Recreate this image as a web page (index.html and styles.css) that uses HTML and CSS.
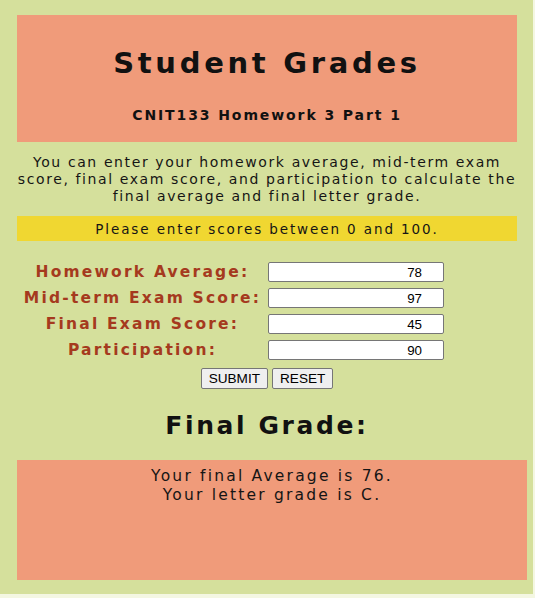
FILE: index.html
```html
<!DOCTYPE html>
<html lang="en">
<head>
<meta charset="utf-8">
<title>Student Grades</title>
<link rel="stylesheet" href="styles.css">
</head>
<body>
<div class="page">
  <header class="banner">
    <h1 class="title">Student Grades</h1>
    <h2 class="subtitle">CNIT133 Homework 3 Part 1</h2>
  </header>
  <p class="intro">You can enter your homework average, mid-term exam score, final exam score, and participation to calculate the final average and final letter grade.</p>
  <div class="notice">Please enter scores between 0 and 100.</div>
  <form class="grades">
    <label class="label" for="hw">Homework Average:</label>
    <input class="field" id="hw" type="text" value="78">
    <label class="label" for="mid">Mid-term Exam Score:</label>
    <input class="field" id="mid" type="text" value="97">
    <label class="label" for="fin">Final Exam Score:</label>
    <input class="field" id="fin" type="text" value="45">
    <label class="label" for="part">Participation:</label>
    <input class="field" id="part" type="text" value="90">
    <div class="actions">
      <button class="btn" type="button">SUBMIT</button>
      <button class="btn" type="reset">RESET</button>
    </div>
  </form>
  <h2 class="final">Final Grade:</h2>
  <div class="result">
    Your final Average is 76.<br>
    Your letter grade is C.
  </div>
</div>
</body>
</html>
```
FILE: styles.css
```css
html, body {
  margin: 0;
  padding: 0;
  background: #f4f7e2;
}
body {
  width: 535px;
  height: 598px;
  overflow: hidden;
}
.page {
  width: 533px;
  height: 594px;
  box-sizing: border-box;
  background: #d5e09c;
  padding: 15px 0 0 17px;
  font-family: "DejaVu Sans", "Open Sans", sans-serif;
  color: #111;
}
.banner {
  width: 500px;
  height: 127px;
  background: #f09b7a;
  text-align: center;
  display: flex;
  flex-direction: column;
  align-items: center;
  box-sizing: border-box;
  padding-top: 30px;
}
.title {
  margin: 0;
  font-size: 29px;
  font-weight: 700;
  letter-spacing: 3.7px;
  line-height: 36px;
}
.subtitle {
  margin: 25px 0 0;
  font-size: 14px;
  font-weight: 700;
  letter-spacing: 1.9px;
  line-height: 18px;
}
.intro {
  width: 500px;
  margin: 12px 0 0;
  text-align: center;
  font-size: 14px;
  line-height: 17px;
  letter-spacing: 1.6px;
  color: #151515;
}
.notice {
  width: 500px;
  height: 25px;
  margin-top: 11px;
  background: #f0d731;
  text-align: center;
  font-size: 13.5px;
  line-height: 26px;
  letter-spacing: 1.9px;
  color: #151515;
}
.grades {
  width: 500px;
  margin-top: 21px;
  display: grid;
  grid-template-columns: 251px 176px 73px;
  row-gap: 6px;
  align-items: center;
}
.label {
  grid-column: 1;
  text-align: center;
  color: #a53a1e;
  font-weight: 700;
  font-size: 15.5px;
  letter-spacing: 2.2px;
  line-height: 20px;
  white-space: nowrap;
}
.field {
  grid-column: 2;
  width: 176px;
  height: 20px;
  box-sizing: border-box;
  border: 1px solid #767676;
  border-radius: 2px;
  background: #fff;
  font-family: "Liberation Sans", Arial, sans-serif;
  font-size: 13.33px;
  text-align: right;
  padding: 1px 21px 1px 2px;
  margin: 0;
  color: #000;
}
.actions {
  grid-column: 1 / -1;
  display: flex;
  justify-content: center;
  gap: 4px;
  margin-top: 2px;
}
.btn {
  height: 21px;
  box-sizing: border-box;
  font-family: "Liberation Sans", Arial, sans-serif;
  font-size: 13.6px;
  background: #efefef;
  border: 1px solid #767676;
  border-radius: 2px;
  padding: 1px 7px;
  color: #000;
  margin: 0;
}
.final {
  width: 500px;
  margin: 22px 0 0;
  text-align: center;
  font-size: 25px;
  font-weight: 700;
  letter-spacing: 2.6px;
  line-height: 30px;
}
.result {
  width: 510px;
  height: 120px;
  margin-top: 19px;
  background: #f09b7a;
  box-sizing: border-box;
  padding-top: 7px;
  text-align: center;
  font-size: 15.5px;
  line-height: 19px;
  letter-spacing: 2.2px;
  color: #151515;
}
```
